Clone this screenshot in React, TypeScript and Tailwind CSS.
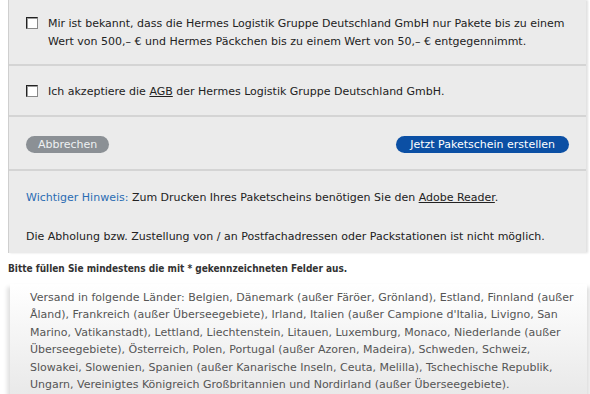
import React from 'react';

function Box() {
  return (
    <span className="mt-[2px] inline-block h-[12px] w-[12px] shrink-0 border border-[#888] border-t-[#222] border-l-[#222] bg-white shadow-[inset_1px_1px_0_#999]" />
  );
}

export default function App() {
  return (
    <main
      className="h-[394px] w-[590px] overflow-hidden bg-white text-[#222]"
      style={{ fontFamily: '"DejaVu Sans", Verdana, sans-serif' }}
    >
      <section className="ml-[8px] mr-[4px] border-l border-[#cfcfcf] bg-[#ebebeb] text-[11px] shadow-[2px_0_2px_rgba(0,0,0,0.12)]">
        <div className="flex gap-[10px] border-b-2 border-[#d4d4d4] pl-[17px] pr-4 pt-[15px] pb-[13px] leading-[18px]">
          <Box />
          <p>
            Mir ist bekannt, dass die Hermes Logistik Gruppe Deutschland GmbH nur Pakete bis zu einem Wert von
            500,– € und Hermes Päckchen bis zu einem Wert von 50,– € entgegennimmt.
          </p>
        </div>
        <div className="flex gap-[10px] border-b-2 border-[#d4d4d4] pl-[17px] pr-4 pt-[17px] pb-[14px] leading-[18px]">
          <Box />
          <p>
            Ich akzeptiere die <span className="underline">AGB</span> der Hermes Logistik Gruppe Deutschland GmbH.
          </p>
        </div>
        <div className="flex items-center justify-between border-b-2 border-[#d4d4d4] pl-[17px] pr-[17px] pt-[19px] pb-[16px]">
          <button className="h-[17px] rounded-full bg-[#8b9095] px-[12px] text-[11px] leading-[17px] text-[#eef0f2]">
            Abbrechen
          </button>
          <button className="h-[17px] rounded-full bg-[#0b4fa4] px-[14px] text-[11px] leading-[17px] text-white">
            Jetzt Paketschein erstellen
          </button>
        </div>
        <div className="pl-[17px] pr-4 pt-[17px] pb-[6px] leading-[20px]">
          <p>
            <span className="text-[#2a6cb3]">Wichtiger Hinweis:</span> Zum Drucken Ihres Paketscheins benötigen Sie
            den <span className="underline">Adobe Reader</span>.
          </p>
          <p className="mt-[19px]">Die Abholung bzw. Zustellung von / an Postfachadressen oder Packstationen ist nicht möglich.</p>
        </div>
      </section>

      <p
        className="mt-[9px] pl-[8px] text-[10px] font-bold leading-[14px] text-[#333]"
        style={{ fontFamily: '"DejaVu Sans Condensed", "DejaVu Sans", sans-serif' }}
      >
        Bitte füllen Sie mindestens die mit * gekennzeichneten Felder aus.
      </p>

      <section className="ml-[10px] mr-[3px] mt-[8px] bg-gradient-to-b from-white to-[#e6e6e6] pb-4 pl-[20px] pr-[4px] pt-[5px] text-[11px] leading-[17.4px] text-[#555] shadow-[-3px_3px_4px_rgba(0,0,0,0.12),3px_3px_4px_rgba(0,0,0,0.12)]">
        <p>
          Versand in folgende Länder: Belgien, Dänemark (außer Färöer, Grönland), Estland, Finnland (außer Åland),
          Frankreich (außer Überseegebiete), Irland, Italien (außer Campione d'Italia, Livigno, San Marino,
          Vatikanstadt), Lettland, Liechtenstein, Litauen, Luxemburg, Monaco, Niederlande (außer Überseegebiete),
          Österreich, Polen, Portugal (außer Azoren, Madeira), Schweden, Schweiz, Slowakei, Slowenien, Spanien (außer
          Kanarische Inseln, Ceuta, Melilla), Tschechische Republik, Ungarn, Vereinigtes Königreich Großbritannien und
          Nordirland (außer Überseegebiete).
        </p>
      </section>
    </main>
  );
}
